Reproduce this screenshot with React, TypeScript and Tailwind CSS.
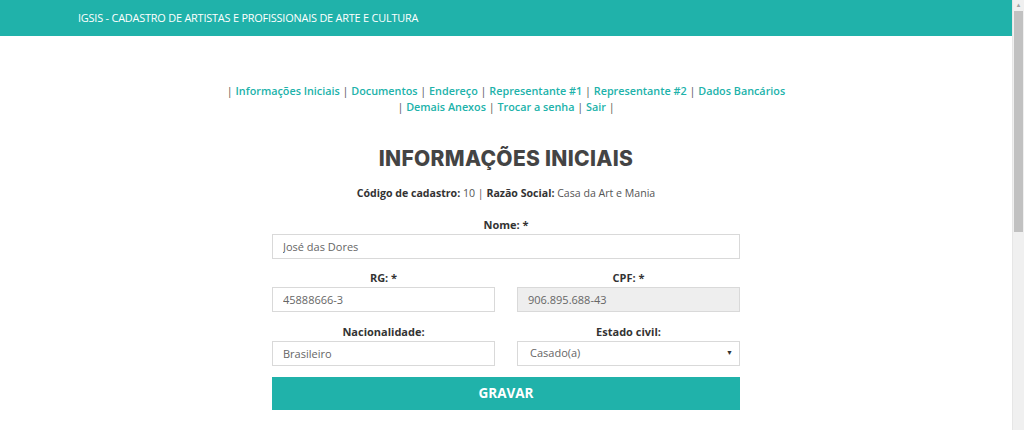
const links = [
  "Informações Iniciais",
  "Documentos",
  "Endereço",
  "Representante #1",
  "Representante #2",
  "Dados Bancários",
];
const links2 = ["Demais Anexos", "Trocar a senha", "Sair"];

function Field({ label, value, disabled }: { label: string; value: string; disabled?: boolean }) {
  return (
    <div className="flex flex-col">
      <label className="text-center font-bold text-[11px] leading-[14px] text-[#333] mb-[2px]">{label}</label>
      <input
        readOnly
        value={value}
        className={
          "h-[25px] border border-[#d9d9d9] px-[10px] text-[11px] text-[#666] outline-none " +
          (disabled ? "bg-[#eeeeee]" : "bg-white")
        }
      />
    </div>
  );
}

export default function App() {
  return (
    <div className="flex h-[430px] w-[1024px] overflow-hidden bg-white" style={{ fontFamily: '"Open Sans", sans-serif' }}>
      <div className="flex-1 flex flex-col">
        <header className="h-[36px] bg-[#20b2aa] flex items-center pl-[78px]">
          <span className="text-white text-[10.9px] tracking-[-0.2px]">IGSIS - CADASTRO DE ARTISTAS E PROFISSIONAIS DE ARTE E CULTURA</span>
        </header>
        <nav className="mt-[47px] text-center text-[10.8px] leading-[16px] text-[#555]">
          <p>
            |{" "}
            {links.map((l, i) => (
              <span key={l}>
                <a href="#" className="font-semibold text-[#20b2aa]">
                  {l}
                </a>
                {i < links.length - 1 ? " | " : ""}
              </span>
            ))}
          </p>
          <p>
            |{" "}
            {links2.map((l) => (
              <span key={l}>
                <a href="#" className="font-semibold text-[#20b2aa]">
                  {l}
                </a>{" "}
                |{" "}
              </span>
            ))}
          </p>
        </nav>
        <h1
          className="mt-[30px] text-center text-[21px] font-extrabold text-[#444] tracking-[0.3px] leading-[28px]"
          style={{ fontFamily: 'Inter, sans-serif' }}
        >
          INFORMAÇÕES INICIAIS
        </h1>
        <p className="mt-[12px] text-center text-[10.6px] leading-[16px] text-[#555]">
          <b className="text-[#333]">Código de cadastro:</b> 10 | <b className="text-[#333]">Razão Social:</b> Casa da Art e Mania
        </p>
        <form className="ml-[272px] mt-[17px] w-[468px] flex flex-col gap-[12px]">
          <Field label="Nome: *" value="José das Dores" />
          <div className="grid grid-cols-2 gap-x-[22px] gap-y-[13px]">
            <Field label="RG: *" value="45888666-3" />
            <Field label="CPF: *" value="906.895.688-43" disabled />
            <Field label="Nacionalidade:" value="Brasileiro" />
            <div className="flex flex-col">
              <label className="text-center font-bold text-[11px] leading-[14px] text-[#333] mb-[2px]">Estado civil:</label>
              <div className="h-[25px] border border-[#d9d9d9] pl-[12px] pr-[6px] text-[11px] text-[#666] flex items-center justify-between">
                <span>Casado(a)</span>
                <span className="text-[7px] text-[#333]">▼</span>
              </div>
            </div>
          </div>
          <button type="button" className="h-[33px] -mt-[1px] bg-[#20b2aa] text-white font-bold text-[13.5px]">
            GRAVAR
          </button>
        </form>
      </div>
      <div className="w-[12px] bg-[#f0f0f0] flex flex-col items-center border-l border-[#e6e6e6]">
        <div className="h-[11px] flex items-center justify-center text-[6px] text-[#a3a3a3]">▲</div>
        <div className="w-[9px] h-[221px] bg-[#c1c1c1]" />
      </div>
    </div>
  );
}
